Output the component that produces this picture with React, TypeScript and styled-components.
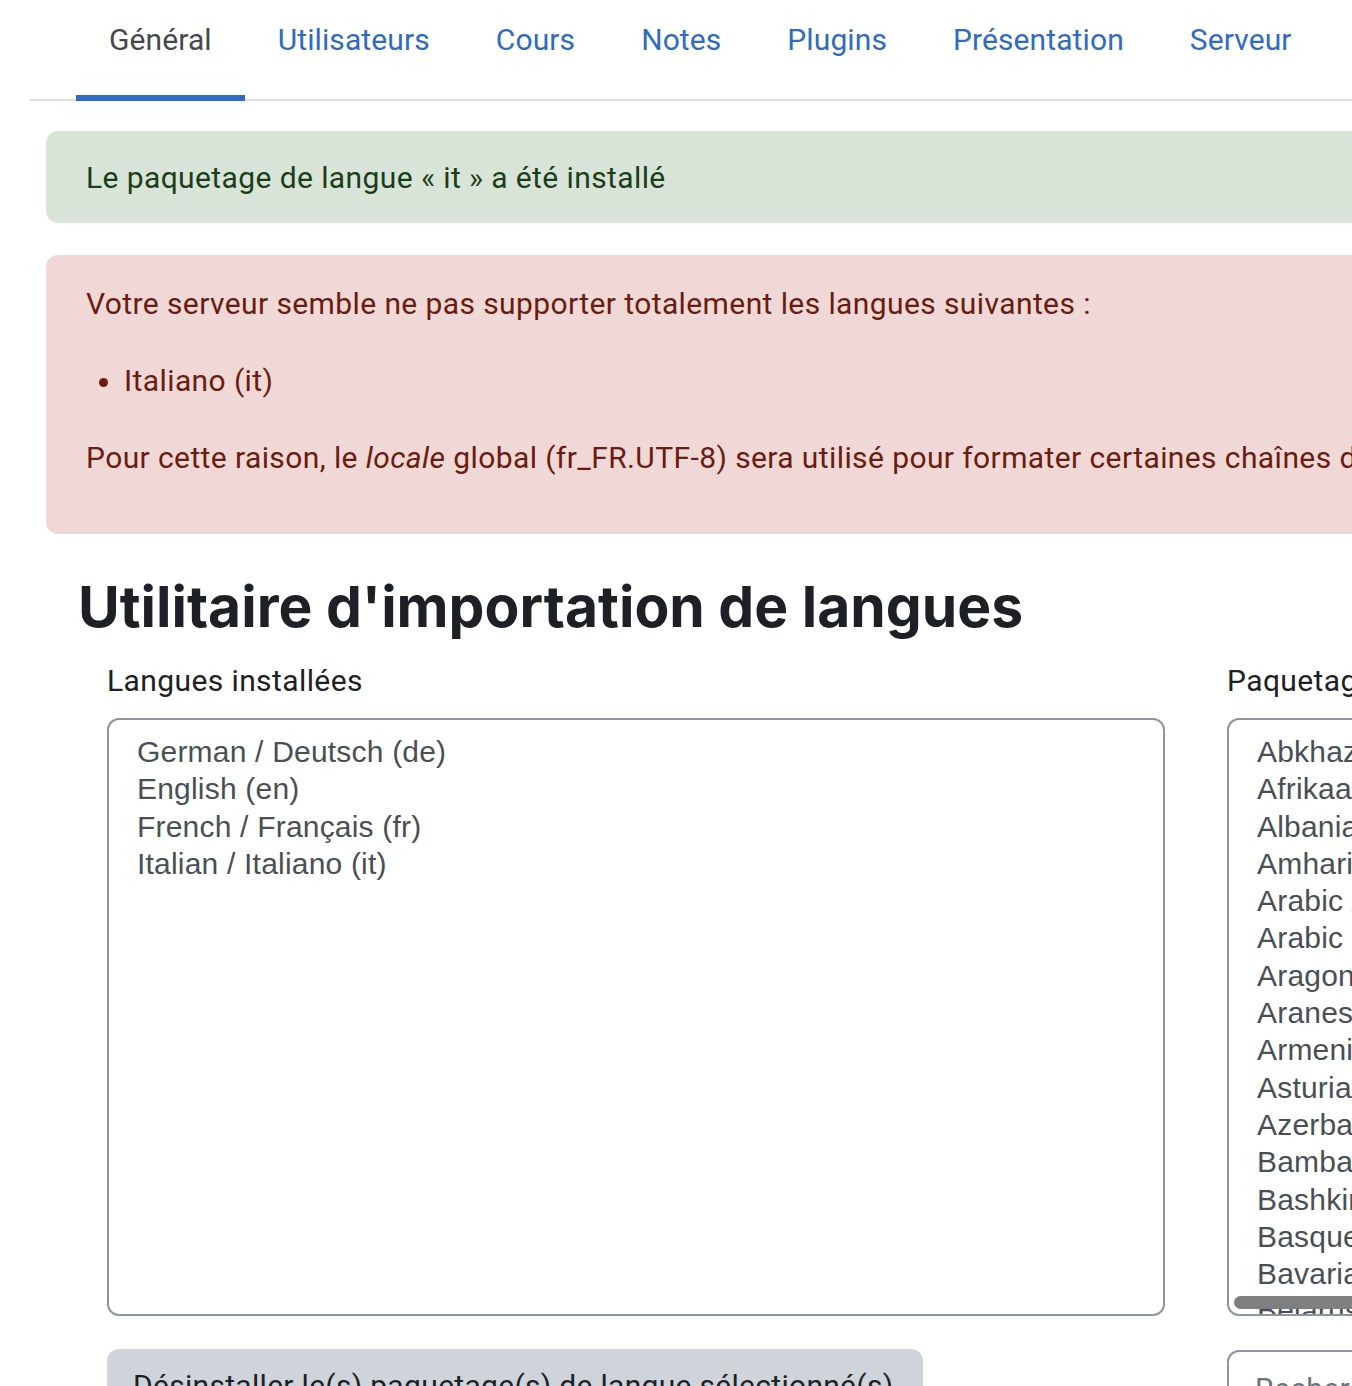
import React from 'react'
import styled, { createGlobalStyle } from 'styled-components'

const GlobalStyle = createGlobalStyle`
  html, body {
    margin: 0;
    padding: 0;
    background: #fff;
    overflow: hidden;
  }
  body {
    font-family: Roboto, "Liberation Sans", sans-serif;
    font-size: 30px;
    line-height: 1.5;
    letter-spacing: 0.4px;
    color: #1d2125;
  }
`

const Page = styled.div`
  width: 2400px;
  padding-left: 30px;
`

const Tabs = styled.ul`
  display: flex;
  margin: 0;
  padding: 0 0 0 46px;
  list-style: none;
  border-bottom: 2px solid #dee2e6;
`

const Tab = styled.li<{ $active?: boolean }>`
  padding: 17px 33px 33px;
  margin-bottom: -2px;
  line-height: 45px;
  letter-spacing: 0.1px;
  border-bottom: 6px solid ${p => (p.$active ? '#2f6bc0' : 'transparent')};
  color: ${p => (p.$active ? '#45494e' : '#2f6bc0')};
  cursor: pointer;
`

const Main = styled.div`
  padding: 30px 0 0 16px;
`

const Alert = styled.div<{ $tone: 'success' | 'danger' }>`
  padding: ${p => (p.$tone === 'success' ? '24px 40px 23px' : '26px 40px 22px')};
  margin-bottom: 32px;
  border-radius: 12px;
  background: ${p => (p.$tone === 'success' ? '#d9e4d8' : '#efd8d5')};
  color: ${p => (p.$tone === 'success' ? '#1c3d1a' : '#6a1b12')};

  p {
    margin: 0 0 32px;
  }
  p:last-child {
    margin-bottom: ${p => (p.$tone === 'success' ? '0' : '32px')};
  }
  ul {
    margin: 0 0 32px;
    padding-left: 38px;
  }
`

const Title = styled.h2`
  margin: 39px 0 18px 32px;
  font-family: Inter, Roboto, sans-serif;
  font-size: 57px;
  font-weight: 700;
  line-height: 67px;
  letter-spacing: 0;
  color: #1d2125;
`

const Columns = styled.div`
  display: flex;
  gap: 62px;
  padding-left: 61px;
`

const Column = styled.div`
  display: flex;
  flex-direction: column;
  width: 1058px;
  flex: none;
`

const Label = styled.label`
  line-height: 45px;
  margin-bottom: 15px;
`

const ListBox = styled.div`
  position: relative;
  height: 598px;
  box-sizing: border-box;
  border: 2px solid #8f959e;
  border-radius: 12px;
  padding: 13px 28px;
  overflow: hidden;
  font-family: "Liberation Sans", Arial, sans-serif;
  font-size: 30px;
  letter-spacing: 0.2px;
  color: #4a4f55;
`

const Option = styled.div`
  line-height: 37.3px;
  white-space: nowrap;
`

const ScrollThumb = styled.div`
  position: absolute;
  left: 5px;
  bottom: 5px;
  width: 900px;
  height: 13px;
  border-radius: 7px;
  background: #7f7f7f;
`

const Button = styled.button`
  align-self: flex-start;
  margin-top: 33px;
  padding: 14px 26px;
  width: 816px;
  text-align: left;
  white-space: nowrap;
  border: none;
  border-radius: 12px;
  background: #ced4da;
  color: #1d2125;
  font-family: inherit;
  font-size: 30px;
  letter-spacing: 0.3px;
  line-height: 45px;
`

const Search = styled.input`
  margin-top: 34px;
  padding: 14px 26px;
  border: 2px solid #8f959e;
  border-radius: 12px;
  font-family: inherit;
  font-size: 30px;
  letter-spacing: 0.4px;
  line-height: 45px;
  color: #1d2125;
  &::placeholder {
    color: #6a737b;
  }
`

const tabs = ['Général', 'Utilisateurs', 'Cours', 'Notes', 'Plugins', 'Présentation', 'Serveur']

const installed = ['German / Deutsch (de)', 'English (en)', 'French / Français (fr)', 'Italian / Italiano (it)']

const available = [
  'Abkhaz / аҧсуа бызшәа (ab)',
  'Afrikaans (af)',
  'Albanian / Shqip (sq)',
  'Amharic / አማርኛ (am)',
  'Arabic / عربي (ar)',
  'Arabic (Saudi Arabia) (ar_sa)',
  'Aragonese / Aragonés (an)',
  'Aranese / Aranés (oc_es)',
  'Armenian / Հայերեն (hy)',
  'Asturian / Asturianu (ast)',
  'Azerbaijani / Azərbaycanca (az)',
  'Bambara / Bamanankan (bm)',
  'Bashkir / Башҡорт теле (ba)',
  'Basque / Euskara (eu)',
  'Bavarian / Boarisch (de_by)',
  'Belarusian / Беларуская (be)',
]

export default function App() {
  return (
    <Page>
      <GlobalStyle />
      <Tabs>
        {tabs.map((t, i) => (
          <Tab key={t} $active={i === 0}>{t}</Tab>
        ))}
      </Tabs>
      <Main>
        <Alert $tone="success">
          <p>Le paquetage de langue « it » a été installé</p>
        </Alert>
        <Alert $tone="danger">
          <p>Votre serveur semble ne pas supporter totalement les langues suivantes :</p>
          <ul>
            <li>Italiano (it)</li>
          </ul>
          <p>
            Pour cette raison, le <em>locale</em> global (fr_FR.UTF-8) sera utilisé pour formater certaines chaînes de
            caractères, comme les dates ou les nombres.
          </p>
        </Alert>
        <Title>Utilitaire d'importation de langues</Title>
        <Columns>
          <Column>
            <Label>Langues installées</Label>
            <ListBox>
              {installed.map(l => (
                <Option key={l}>{l}</Option>
              ))}
            </ListBox>
            <Button>Désinstaller le(s) paquetage(s) de langue sélectionné(s)</Button>
          </Column>
          <Column>
            <Label>Paquetages de langue disponibles</Label>
            <ListBox>
              {available.map(l => (
                <Option key={l}>{l}</Option>
              ))}
              <ScrollThumb />
            </ListBox>
            <Search placeholder="Rechercher" />
          </Column>
        </Columns>
      </Main>
    </Page>
  )
}
